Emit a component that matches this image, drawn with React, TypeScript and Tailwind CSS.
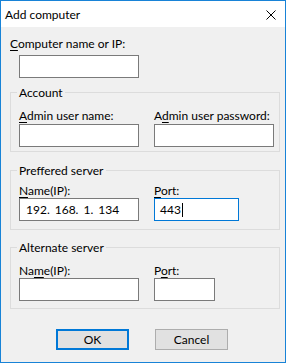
import React from 'react';

const font = { fontFamily: 'Lato, "Liberation Sans", sans-serif' };

function Key({ children }: { children: React.ReactNode }) {
  return <span className="underline underline-offset-2">{children}</span>;
}

function Field({ className = '', focused = false, children }: { className?: string; focused?: boolean; children?: React.ReactNode }) {
  return (
    <div
      className={`h-[23px] bg-white border flex items-center ${focused ? 'border-[#0078d7]' : 'border-[#7a7a7a]'} ${className}`}
    >
      {children}
    </div>
  );
}

function Group({ title, className = '', children }: { title: string; className?: string; children: React.ReactNode }) {
  return (
    <fieldset className={`ml-[9px] w-[270px] border border-[#dcdcdc] ${className}`}>
      <legend className="ml-[6px] px-[2px] leading-[15px]">{title}</legend>
      {children}
    </fieldset>
  );
}

export default function App() {
  return (
    <div
      className="w-[286px] h-[363px] border border-[#1883d7] bg-[#f0f0f0] text-[12px] text-black flex flex-col"
      style={font}
    >
      {/* Title bar */}
      <div className="h-[26px] bg-white flex items-center justify-between pl-[4px] pr-[9px]">
        <span className="leading-[15px]">Add computer</span>
        <svg width="10" height="10" viewBox="0 0 10 10" className="mt-[1px]">
          <path d="M0.5 0.5 L9.5 9.5 M9.5 0.5 L0.5 9.5" stroke="#000" strokeWidth="1" />
        </svg>
      </div>

      {/* Computer name */}
      <div className="mt-[9px] ml-[9px] leading-[15px]">
        <Key>C</Key>omputer name or IP:
      </div>
      <Field className="mt-[4px] ml-[18px] w-[120px]" />

      {/* Account */}
      <Group title="Account" className="mt-[7px] pb-[4px]">
        <div className="flex pl-[8px] gap-[15px] mt-[8px]">
          <div className="flex flex-col">
            <div className="leading-[15px] mb-[1px]">
              <Key>A</Key>dmin user name:
            </div>
            <Field className="w-[120px]" />
          </div>
          <div className="flex flex-col">
            <div className="leading-[15px] mb-[1px]">
              A<Key>d</Key>min user password:
            </div>
            <Field className="w-[120px]" />
          </div>
        </div>
      </Group>

      {/* Preferred server */}
      <Group title="Preffered server" className="mt-[11px] pb-[8px]">
        <div className="flex pl-[8px] gap-[15px] mt-[5px]">
          <div className="flex flex-col">
            <div className="leading-[15px]">
              <Key>N</Key>ame(IP):
            </div>
            <Field className="w-[120px] pl-[6px]">
              <div className="flex gap-[5px] leading-[15px]">
                <span>192.</span>
                <span>168.</span>
                <span>1.</span>
                <span>134</span>
              </div>
            </Field>
          </div>
          <div className="flex flex-col">
            <div className="leading-[15px]">
              <Key>P</Key>ort:
            </div>
            <Field focused className="w-[85px] pl-[5px]">
              <span className="leading-[15px]">443</span>
              <span className="w-px h-[14px] bg-black ml-[1px]" />
            </Field>
          </div>
        </div>
      </Group>

      {/* Alternate server */}
      <Group title="Alternate server" className="mt-[10px] pb-[7px]">
        <div className="flex pl-[8px] gap-[15px] mt-[8px]">
          <div className="flex flex-col">
            <div className="leading-[15px]">
              Na<Key>m</Key>e(IP):
            </div>
            <Field className="w-[120px]" />
          </div>
          <div className="flex flex-col">
            <div className="leading-[15px]">
              P<Key>o</Key>rt:
            </div>
            <Field className="w-[61px]" />
          </div>
        </div>
      </Group>

      {/* Buttons */}
      <div className="mt-[20px] flex justify-center gap-[26px] pr-[2px]">
        <button className="w-[73px] h-[21px] bg-[#e1e1e1] border-2 border-[#0078d7] leading-[15px]">OK</button>
        <button className="w-[73px] h-[21px] bg-[#e1e1e1] border border-[#adadad] leading-[15px]">Cancel</button>
      </div>
    </div>
  );
}
